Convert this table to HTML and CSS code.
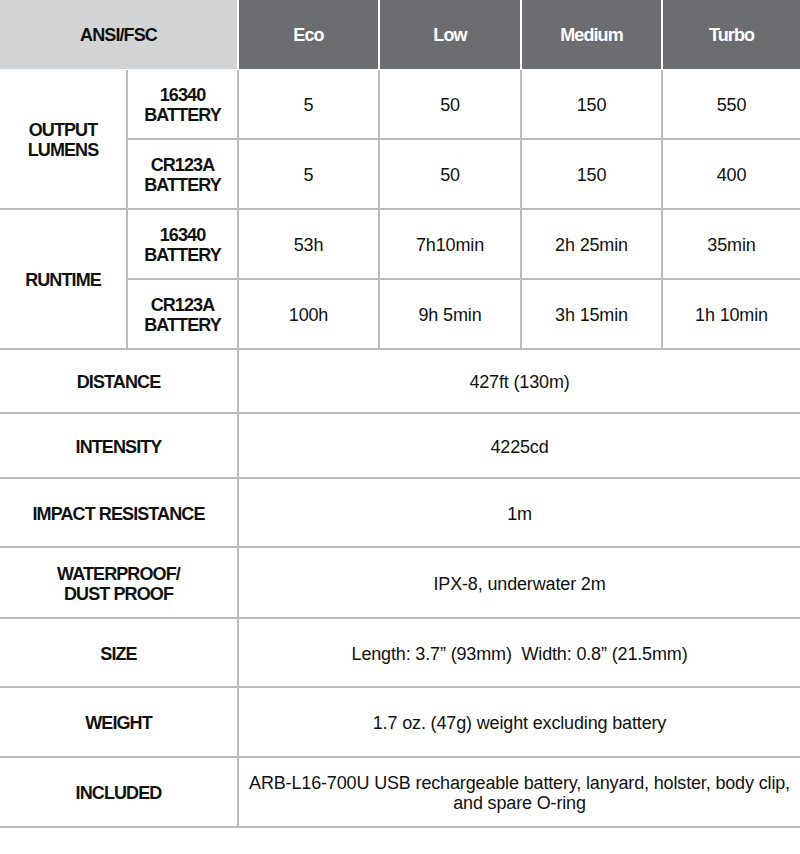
FILE: index.html
```html
<!DOCTYPE html>
<html>
<head>
<meta charset="utf-8">
<link rel="stylesheet" href="styles.css">
</head>
<body>
<div class="spec">
  <div class="head">
    <div class="hcell ansi">ANSI/FSC</div>
    <div class="hcell mode">Eco</div>
    <div class="hcell mode">Low</div>
    <div class="hcell mode">Medium</div>
    <div class="hcell mode">Turbo</div>
  </div>
  <div class="body">
    <div class="cell label group g1">OUTPUT<br>LUMENS</div>
    <div class="cell label">16340<br>BATTERY</div>
    <div class="cell">5</div>
    <div class="cell">50</div>
    <div class="cell">150</div>
    <div class="cell">550</div>
    <div class="cell label">CR123A<br>BATTERY</div>
    <div class="cell">5</div>
    <div class="cell">50</div>
    <div class="cell">150</div>
    <div class="cell">400</div>

    <div class="cell label group g2">RUNTIME</div>
    <div class="cell label">16340<br>BATTERY</div>
    <div class="cell">53h</div>
    <div class="cell">7h10min</div>
    <div class="cell">2h 25min</div>
    <div class="cell">35min</div>
    <div class="cell label">CR123A<br>BATTERY</div>
    <div class="cell">100h</div>
    <div class="cell">9h 5min</div>
    <div class="cell">3h 15min</div>
    <div class="cell">1h 10min</div>

    <div class="cell label wide">DISTANCE</div>
    <div class="cell full">427ft (130m)</div>
    <div class="cell label wide">INTENSITY</div>
    <div class="cell full">4225cd</div>
    <div class="cell label wide">IMPACT RESISTANCE</div>
    <div class="cell full">1m</div>
    <div class="cell label wide">WATERPROOF/<br>DUST PROOF</div>
    <div class="cell full">IPX-8, underwater 2m</div>
    <div class="cell label wide">SIZE</div>
    <div class="cell full">Length: 3.7” (93mm)&nbsp; Width: 0.8” (21.5mm)</div>
    <div class="cell label wide">WEIGHT</div>
    <div class="cell full">1.7 oz. (47g) weight excluding battery</div>
    <div class="cell label wide">INCLUDED</div>
    <div class="cell full">ARB-L16-700U USB rechargeable battery, lanyard, holster, body clip,<br>and spare O-ring</div>
  </div>
</div>
</body>
</html>
```

FILE: styles.css
```css
html, body {
  margin: 0;
  padding: 0;
  background: #ffffff;
}

.spec {
  width: 800px;
  font-family: "Liberation Sans", Arial, sans-serif;
  color: #111111;
}

.head,
.body {
  display: grid;
  grid-template-columns: 126px 109px 139px 140px 139px 137px;
  column-gap: 2px;
}

.head {
  background: #ffffff;
  grid-template-rows: 69px;
  padding-bottom: 1px;
}

.hcell {
  display: flex;
  align-items: center;
  justify-content: center;
  font-weight: bold;
  font-size: 18px;
  letter-spacing: -0.9px;
  padding-top: 1px;
}

.ansi {
  grid-column: 1 / 3;
  background: #d3d4d6;
  color: #111111;
}

.mode {
  background: #6c6d71;
  color: #ffffff;
}

.body {
  background: #bbbcbe;
  row-gap: 2px;
  padding-bottom: 2px;
  grid-template-rows: 68px 68px 68px 68px 62px 63px 67px 69px 67px 68px 68px;
}

.cell {
  background: #ffffff;
  display: flex;
  align-items: center;
  justify-content: center;
  text-align: center;
  font-size: 18px;
  line-height: 20px;
  letter-spacing: -0.15px;
  padding-top: 2px;
}

.label {
  font-weight: bold;
  letter-spacing: -0.9px;
}

.group {
  grid-row: span 2;
}

.wide {
  grid-column: 1 / 3;
}

.full {
  grid-column: 3 / 7;
}
```
